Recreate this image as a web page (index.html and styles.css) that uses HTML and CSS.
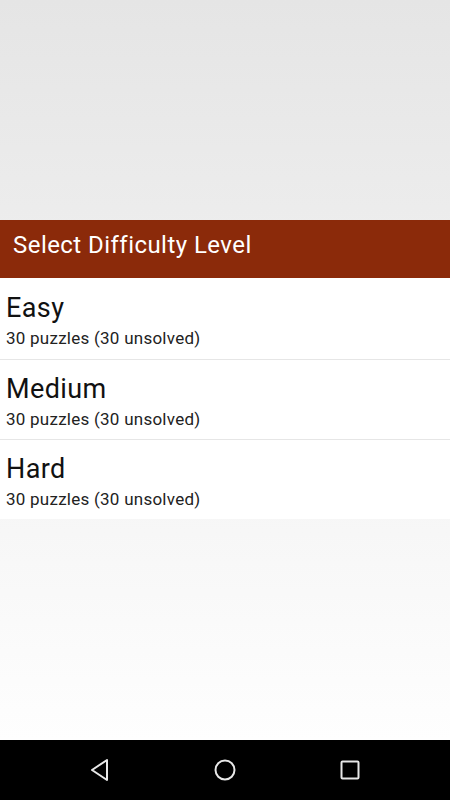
FILE: index.html
```html
<!DOCTYPE html>
<html>
<head>
<meta charset="utf-8">
<link rel="stylesheet" href="styles.css">
</head>
<body>
<div class="screen">
  <div class="app">
    <div class="top-space"></div>
    <div class="dialog">
      <div class="dialog-title">Select Difficulty Level</div>
      <div class="item first">
        <div class="item-title">Easy</div>
        <div class="item-sub">30 puzzles (30 unsolved)</div>
      </div>
      <div class="item">
        <div class="item-title">Medium</div>
        <div class="item-sub">30 puzzles (30 unsolved)</div>
      </div>
      <div class="item">
        <div class="item-title">Hard</div>
        <div class="item-sub">30 puzzles (30 unsolved)</div>
      </div>
    </div>
  </div>
  <div class="navbar">
    <svg class="nav-icon" width="24" height="24" viewBox="0 0 24 24"><path d="M19 2 L4 12 L19 22 Z" fill="none" stroke="#e8e8e8" stroke-width="2" stroke-linejoin="round"/></svg>
    <svg class="nav-icon" width="24" height="24" viewBox="0 0 24 24"><circle cx="12" cy="12" r="9.5" fill="none" stroke="#e8e8e8" stroke-width="2"/></svg>
    <svg class="nav-icon" width="24" height="24" viewBox="0 0 24 24"><rect x="3.5" y="3.5" width="17" height="17" rx="1" fill="none" stroke="#e8e8e8" stroke-width="2"/></svg>
  </div>
</div>
</body>
</html>
```

FILE: styles.css
```css
html, body {
  margin: 0;
  padding: 0;
}
body {
  font-family: Roboto, "Noto Sans", sans-serif;
}
.screen {
  width: 450px;
  height: 800px;
  display: flex;
  flex-direction: column;
}
.app {
  flex: 1;
  display: flex;
  flex-direction: column;
  background: linear-gradient(to bottom, #e5e5e5 0%, #fefefe 100%);
}
.top-space {
  height: 220px;
}
.dialog {
  background: #ffffff;
}
.dialog-title {
  height: 58px;
  background: #8b2a0a;
  color: #ffffff;
  font-size: 24px;
  letter-spacing: 0.45px;
  line-height: 50px;
  padding-left: 13px;
  box-sizing: border-box;
}
.item {
  height: 80px;
  padding-left: 6px;
  box-sizing: border-box;
  color: #111111;
  border-top: 1px solid #e6e6e6;
}
.item.first {
  border-top: none;
  height: 81px;
  padding-top: 1px;
}
.item-title {
  font-size: 27px;
  letter-spacing: 0.4px;
  line-height: 26px;
  padding-top: 16px;
}
.item-sub {
  font-size: 17px;
  letter-spacing: 0.25px;
  line-height: 20px;
  margin-top: 7px;
  color: #222222;
}
.navbar {
  height: 60px;
  background: #000000;
  display: flex;
  align-items: center;
  justify-content: space-between;
  padding: 0 88px;
  box-sizing: border-box;
}
.nav-icon {
  display: block;
}
```
